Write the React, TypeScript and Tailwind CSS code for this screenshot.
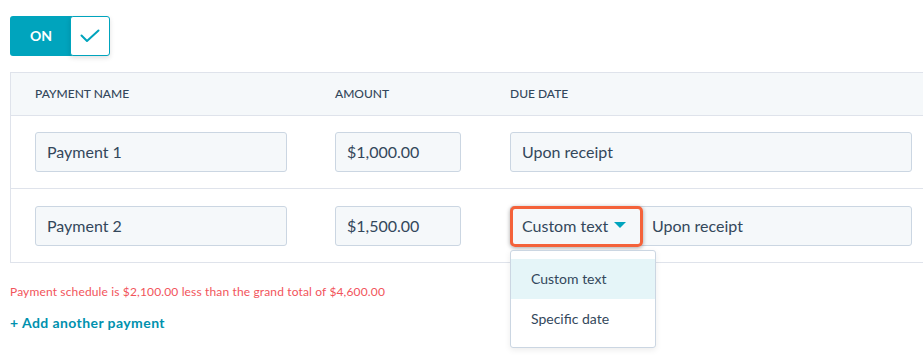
import React from 'react';

const inputCls =
  'h-10 bg-[#f5f8fa] border border-[#cbd6e2] rounded-[3px] flex items-center px-[11px] text-base text-[#33475b]';

const Row: React.FC<{ name: string; amount: string; custom?: boolean; last?: boolean }> = ({
  name,
  amount,
  custom,
  last,
}) => (
  <div className={`h-[73px] flex items-center pl-6 ${last ? '' : 'border-b border-[#dfe3eb]'}`}>
    <div className={`${inputCls} w-[252px]`}>{name}</div>
    <div className={`${inputCls} w-[126px] ml-[48px]`}>{amount}</div>
    {custom ? (
      <div className={`${inputCls} w-[402px] ml-[49px] !px-0 relative`}>
        <div className="absolute -left-px -top-px w-[133px] h-[41px] border-[3px] border-[#f4623a] rounded-[5px] shadow-[0_1px_4px_rgba(0,0,0,0.35)]" />
        <div className="w-[132px] flex items-center pl-[11px] gap-[6px]">
          <span>Custom text</span>
          <svg width="12" height="7" viewBox="0 0 12 7">
            <path d="M0 0 L12 0 L6 6 Z" fill="#00a4bd" />
          </svg>
        </div>
        <span className="ml-[9px]">Upon receipt</span>
      </div>
    ) : (
      <div className={`${inputCls} w-[402px] ml-[49px]`}>Upon receipt</div>
    )}
  </div>
);

export default function App() {
  return (
    <div
      className="w-[923px] h-[358px] bg-white overflow-hidden relative"
      style={{ fontFamily: 'Lato, "Noto Sans", sans-serif' }}
    >
      <div className="pt-4 pl-[10px]">
        <div className="flex h-10">
          <div className="w-[62px] bg-[#00a4bd] rounded-l-[3px] text-white font-bold text-sm flex items-center justify-center">
            ON
          </div>
          <div className="-ml-[2px] w-10 bg-white border border-[#00a4bd] rounded-[3px] shadow-[0_2px_5px_rgba(0,0,0,0.12)] flex items-center justify-center">
            <svg width="20" height="14" viewBox="0 0 20 14">
              <path d="M1.5 6.5 L7 12 L18.5 1.5" fill="none" stroke="#00a4bd" strokeWidth="2" strokeLinecap="round" strokeLinejoin="round" />
            </svg>
          </div>
        </div>
      </div>

      <div className="ml-[10px] mt-4 w-[930px] border border-r-0 border-[#dfe3eb]">
        <div className="h-[43px] bg-[#f5f8fa] border-b border-[#dfe3eb] flex items-center pl-6 text-xs text-[#33475b] font-medium uppercase">
          <div className="w-[252px]">Payment name</div>
          <div className="w-[126px] ml-[48px]">Amount</div>
          <div className="ml-[49px]">Due date</div>
        </div>
        <Row name="Payment 1" amount="$1,000.00" />
        <Row name="Payment 2" amount="$1,500.00" custom last />
      </div>

      <div className="ml-[10px] mt-[21px] text-xs tracking-[0.012em] text-[#f2545b]">
        Payment schedule is $2,100.00 less than the grand total of $4,600.00
      </div>
      <div className="ml-[10px] mt-[13px] text-sm font-bold tracking-[0.03em] text-[#0091ae]">+ Add another payment</div>

      <div className="absolute left-[510px] top-[250px] w-[146px] h-[98px] bg-white border border-[#cbd6e2] rounded-[3px] shadow-[0_2px_6px_rgba(0,0,0,0.08)] pt-[8px] text-sm text-[#33475b]">
        <div className="h-10 bg-[#e5f5f8] flex items-center pl-5">Custom text</div>
        <div className="h-10 flex items-center pl-5">Specific date</div>
      </div>
    </div>
  );
}
